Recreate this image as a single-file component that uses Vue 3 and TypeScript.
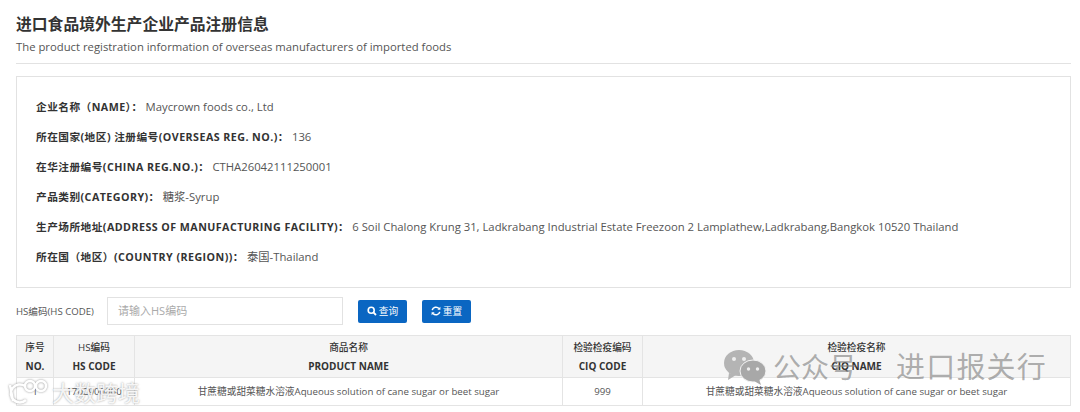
<script setup lang="ts">
interface Row { label: string; value: string }
const rows: Row[] = [
  { label: '企业名称（NAME）：', value: 'Maycrown foods co., Ltd' },
  { label: '所在国家(地区) 注册编号(OVERSEAS REG. NO.)：', value: '136' },
  { label: '在华注册编号(CHINA REG.NO.)：', value: 'CTHA26042111250001' },
  { label: '产品类别(CATEGORY)：', value: '糖浆-Syrup' },
  { label: '生产场所地址(ADDRESS OF MANUFACTURING FACILITY)：', value: '6 Soil Chalong Krung 31, Ladkrabang Industrial Estate Freezoon 2 Lamplathew,Ladkrabang,Bangkok 10520 Thailand' },
  { label: '所在国（地区）(COUNTRY (REGION))：', value: '泰国-Thailand' },
]
</script>

<template>
  <div class="page">
    <h1 class="title">进口食品境外生产企业产品注册信息</h1>
    <p class="subtitle">The product registration information of overseas manufacturers of imported foods</p>
    <div class="info">
      <div v-for="r in rows" :key="r.label" class="info-row">
        <b>{{ r.label }}</b><span>{{ r.value }}</span>
      </div>
    </div>
    <div class="search">
      <label>HS编码(HS CODE)</label>
      <div class="input">请输入HS编码</div>
      <button class="btn">
        <svg width="10" height="10" viewBox="0 0 10 10"><circle cx="4.2" cy="4.2" r="3" fill="none" stroke="#fff" stroke-width="1.6"/><path d="M6.4 6.4 9 9" stroke="#fff" stroke-width="1.8"/></svg>查询
      </button>
      <button class="btn">
        <svg width="10" height="10" viewBox="0 0 10 10"><path d="M1.2 4.2A3.9 3.9 0 0 1 8 2.6M8.8 5.8A3.9 3.9 0 0 1 2 7.4" fill="none" stroke="#fff" stroke-width="1.5"/><path d="M9.4.8v3H6.4zM.6 9.2v-3h3z" fill="#fff"/></svg>重置
      </button>
    </div>
    <table>
      <colgroup>
        <col class="c1" /><col class="c2" /><col class="c3" /><col class="c4" /><col />
      </colgroup>
      <thead>
        <tr>
          <th><i>序号</i><br />NO.</th>
          <th><i>HS编码</i><br />HS CODE</th>
          <th><i>商品名称</i><br />PRODUCT NAME</th>
          <th><i>检验检疫编码</i><br />CIQ CODE</th>
          <th><i>检验检疫名称</i><br />CIQ NAME</th>
        </tr>
      </thead>
      <tbody>
        <tr>
          <td>1</td>
          <td>1702900000</td>
          <td>甘蔗糖或甜菜糖水溶液Aqueous solution of cane sugar or beet sugar</td>
          <td>999</td>
          <td>甘蔗糖或甜菜糖水溶液Aqueous solution of cane sugar or beet sugar</td>
        </tr>
      </tbody>
    </table>
    <div class="wm-right">
      <svg width="46" height="36" viewBox="0 0 46 36">
        <ellipse cx="17" cy="14" rx="15" ry="13" fill="#b4b4b4"/>
        <path d="M7 24 6 31l8-5z" fill="#b4b4b4"/>
        <circle cx="12" cy="10" r="2" fill="#eee"/><circle cx="22" cy="10" r="2" fill="#eee"/>
        <ellipse cx="31" cy="22" rx="13" ry="11" fill="#a8a8a8" stroke="#f4f4f4" stroke-width="1"/>
        <path d="M37 30l2 6-7-4z" fill="#a8a8a8"/>
        <circle cx="26.500" cy="20" r="1.700" fill="#eee"/><circle cx="35.500" cy="20" r="1.700" fill="#eee"/>
      </svg>
      <span class="wm-a">公众号</span><span class="wm-dot">·</span><span class="wm-b">进口报关行</span>
    </div>
    <div class="wm-left">
      <svg width="46" height="26" viewBox="0 0 46 26" fill="none" stroke="#fff" stroke-width="2.5">
        <path d="M4 6 7 22M19 7A9 9 0 1 0 20 21"/><circle cx="24" cy="7" r="5"/><circle cx="35" cy="7" r="5"/>
      </svg>
      <span>大数跨境</span>
    </div>
  </div>
</template>

<style scoped>
.page {
  position: relative;
  box-sizing: border-box;
  width: 1080px;
  height: 412px;
  overflow: hidden;
  padding: 14px 9px 0 16px;
  background: #fff;
  color: #333;
  font-family: "Open Sans", "Noto Sans CJK SC", sans-serif;
  font-size: 11.3px;
}
.title {
  margin: 0;
  font-size: 15.8px;
  line-height: 20px;
  font-weight: 700;
  color: #333;
}
.subtitle {
  margin: 4px 0 0;
  line-height: 17px;
  padding-bottom: 8px;
  border-bottom: 1px solid #e2e2e2;
  color: #555;
}
.info {
  box-sizing: border-box;
  height: 212px;
  margin-top: 12px;
  padding: 15px 19px;
  border: 1px solid #e2e2e2;
}
.info-row {
  height: 30px;
  line-height: 30px;
  white-space: nowrap;
}
.info-row b { font-weight: 700; font-size: 10.7px; letter-spacing: .45px; color: #333; }
.info-row span { color: #555; margin-left: 3px; }
.search {
  display: flex;
  align-items: center;
  height: 28px;
  margin-top: 9px;
}
.search label { width: 91px; font-size: 9.6px; color: #555; }
.input {
  box-sizing: border-box;
  width: 236px;
  height: 28px;
  padding-left: 10px;
  line-height: 26px;
  border: 1px solid #e2e2e2;
  color: #aaa;
  font-size: 11px;
}
.btn {
  display: flex;
  align-items: center;
  justify-content: center;
  gap: 2px;
  width: 49px;
  height: 23px;
  margin-left: 15px;
  padding: 0;
  border: 0;
  border-radius: 2px;
  background: #0a66c2;
  color: #fff;
  font-family: inherit;
  font-size: 9.7px;
}
table {
  width: 1055px;
  margin-top: 10px;
  border-collapse: collapse;
  table-layout: fixed;
  font-size: 9.7px;
  text-align: center;
}
.c1 { width: 37px; }
.c2 { width: 81px; }
.c3 { width: 428px; }
.c4 { width: 80px; }
th, td { border: 1px solid #e4e4e4; padding: 0; }
th {
  height: 41px;
  background: #f5f5f5;
  font-weight: 700;
  line-height: 18px;
  font-size: 10px;
  color: #333;
}
th i { font-style: normal; font-weight: 500; font-size: 9.7px; }
td { height: 26px; padding-bottom: 1px; color: #555; }
.wm-right {
  position: absolute;
  left: 722px;
  top: 349px;
  display: flex;
  align-items: center;
  color: rgba(130,130,130,.65);
  line-height: 36px;
  white-space: nowrap;
}
.wm-a { margin-left: 5px; font-size: 28px; }
.wm-dot { width: 39px; text-align: center; font-size: 28px; }
.wm-b { font-size: 29px; letter-spacing: 1.2px; }
.wm-left {
  position: absolute;
  left: 6px;
  top: 379px;
  display: flex;
  align-items: center;
  color: rgba(255,255,255,.9);
  font-size: 22px;
  line-height: 26px;
  text-shadow: 0 0 2px rgba(110,110,110,.7);
}
.wm-left svg { filter: drop-shadow(0 0 1px rgba(110,110,110,.7)); }
</style>
